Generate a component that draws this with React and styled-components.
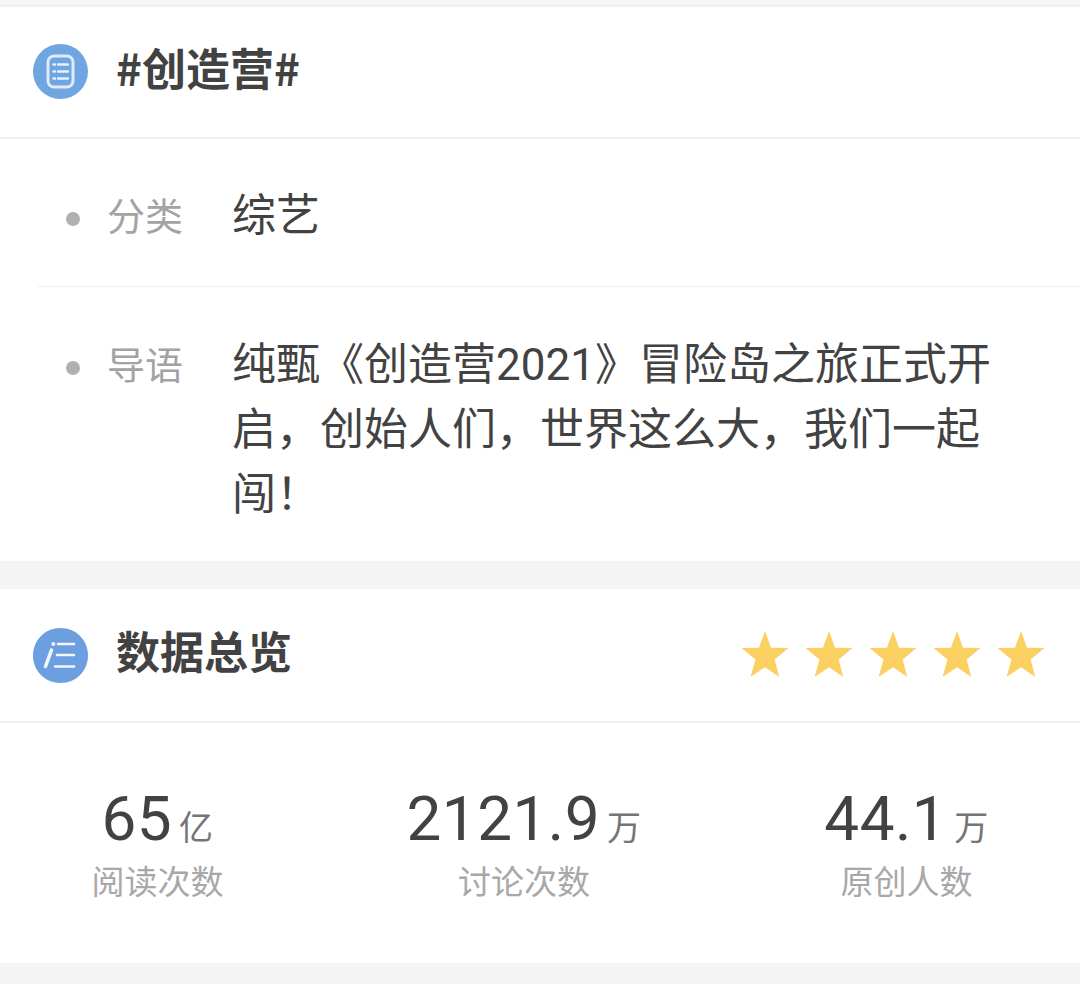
import React from 'react'
import styled, { createGlobalStyle } from 'styled-components';

const Global = createGlobalStyle`
  html, body { margin:0; padding:0; background:#fff; }
  body { font-family:"Roboto","Noto Sans CJK SC",sans-serif; }
`;

const Page = styled.div`
  width:1080px;
  height:984px;
  overflow:hidden;
  background:#f4f4f4;
`;
const TopStrip = styled.div`
  height:5px;
  background:#f5f5f5;
  box-shadow:0 1px 3px rgba(0,0,0,0.12);
  position:relative;
`;
const Card = styled.section`
  background:#fff;
  margin-bottom:${props => props.$gap}px;
`;
const CardHeader = styled.header`
  height:${props => props.$height}px;
  box-sizing:border-box;
  padding:0 34px 0 33px;
  display:flex;
  align-items:center;
  border-bottom:2px solid #f1f1f1;
`;
const Title = styled.h2`
  margin:0 0 ${props => props.$lift}px 28px;
  flex:1;
  font-size:44px;
  line-height:60px;
  font-weight:700;
  color:#424242;
  font-family:"Noto Sans CJK SC",sans-serif;
`;
const IconBadge = styled.svg`
  width:55px;
  height:55px;
  flex:none;
`;
const Stars = styled.div`
  display:flex;
  gap:16px;
  margin:0 1px 2px 0;
`;
const Row = styled.div`
  margin-left:38px;
  padding:${props => props.$pad};
  display:flex;
  align-items:flex-start;
  border-bottom:${props => props.$line ? '1px solid #efefef' : 'none'};
`;
const Dot = styled.span`
  width:14px;
  height:14px;
  border-radius:50%;
  background:#b0b0b0;
  flex:none;
  margin:30px 0 0 28px;
`;
const Label = styled.span`
  width:125px;
  flex:none;
  margin:-1px 0 0 27px;
  font-size:38px;
  line-height:65px;
  color:#a3a3a3;
  font-family:"Noto Sans CJK SC",sans-serif;
`;
const Value = styled.div`
  flex:1;
  margin-top:2px;
  font-size:44px;
  line-height:65px;
  color:#424242;
  font-family:"Roboto","Noto Sans CJK SC",sans-serif;
  padding-right:${props => props.$right}px;
`;
const StatsGrid = styled.div`
  height:240px;
  box-sizing:border-box;
  padding-top:60px;
  display:grid;
  grid-template-columns:315px 418px 347px;
`;
const Stat = styled.div`
  display:flex;
  flex-direction:column;
  align-items:center;
`;
const Number = styled.div`
  font-size:62px;
  line-height:72px;
  color:#424242;
  white-space:nowrap;
  letter-spacing:0.5px;
`;
const Unit = styled.span`
  font-size:34px;
  color:#757575;
  margin-left:7px;
  font-family:"Noto Sans CJK SC",sans-serif;
`;
const Caption = styled.div`
  font-size:33px;
  line-height:36px;
  color:#a8a8a8;
  font-family:"Noto Sans CJK SC",sans-serif;
`;

const ListIcon = () => (
  <IconBadge viewBox="0 0 55 55">
    <circle cx="27.5" cy="27.5" r="27.5" fill="#6fa5e0" />
    <rect x="15" y="12" width="25" height="31" rx="6" fill="none" stroke="#dfeafa" strokeWidth="3" />
    <path d="M20.500 20.500h1.500M25 20.500h10M20.500 27.500h1.500M25 27.500h10M20.500 34.500h1.500M25 34.500h10" stroke="#e8f1fb" strokeWidth="2.400" strokeLinecap="round" />
  </IconBadge>
);

const InfoIcon = () => (
  <IconBadge viewBox="0 0 55 55">
    <path d="M27.5 0C43 0 55 12 55 27.5S43 55 27.5 55 0 43 0 27.5 12 0 27.5 0z" fill="#6b9fdf" />
    <path d="M18.500 22L12.500 38.500" stroke="#f2f7fd" strokeWidth="3.600" strokeLinecap="round" fill="none" />
    <circle cx="20.300" cy="16" r="2" fill="#f2f7fd" />
    <path d="M25 16h16M24 27h17M22 38.500h19" stroke="#f2f7fd" strokeWidth="2.600" strokeLinecap="round" fill="none" />
  </IconBadge>
);

const Star = () => (
  <svg width="48" height="48" viewBox="0 0 50 50">
    <path d="M25 1l6.300 17.600L49.500 18.800 35 30.600 40 49 25 38.700 10 49 15 30.600 0.500 18.800 18.700 18.600z" fill="#fbd063" />
  </svg>
);

const stats = [
  { num: '65', unit: '亿', label: '阅读次数' },
  { num: '2121.9', unit: '万', label: '讨论次数' },
  { num: '44.1', unit: '万', label: '原创人数' },
];

export default function App() {
  return (
    <Page>
      <Global />
      <TopStrip />
      <Card $gap={28}>
        <CardHeader $height={134}>
          <ListIcon />
          <Title $lift={9}>#创造营#</Title>
        </CardHeader>
        <Row $line $pad="43px 0 37px">
          <Dot />
          <Label>分类</Label>
          <Value>综艺</Value>
        </Row>
        <Row $pad="44px 0 33px">
          <Dot />
          <Label>导语</Label>
          <Value $right={85}>纯甄《创造营2021》冒险岛之旅正式开启，创始人们，世界这么大，我们一起闯！</Value>
        </Row>
      </Card>
      <Card $gap={0}>
        <CardHeader $height={134}>
          <InfoIcon />
          <Title $lift={10}>数据总览</Title>
          <Stars>
            {[0, 1, 2, 3, 4].map(i => <Star key={i} />)}
          </Stars>
        </CardHeader>
        <StatsGrid>
          {stats.map(s => (
            <Stat key={s.label}>
              <Number>{s.num}<Unit>{s.unit}</Unit></Number>
              <Caption>{s.label}</Caption>
            </Stat>
          ))}
        </StatsGrid>
      </Card>
    </Page>
  )
}
